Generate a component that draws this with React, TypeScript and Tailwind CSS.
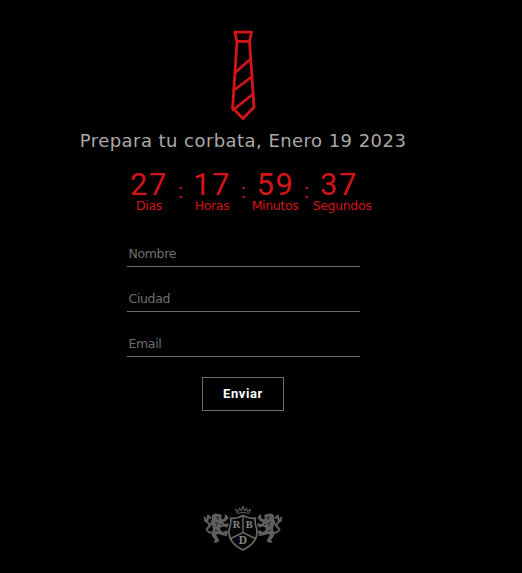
import React from "react";

const units = [
  { value: "27", label: "Dias", width: "w-[52px]", shift: "" },
  { value: "17", label: "Horas", width: "w-[52px]", shift: "" },
  { value: "59", label: "Minutos", width: "w-[52px]", shift: "pl-px" },
  { value: "37", label: "Segundos", width: "w-[60px]", shift: "pr-[6px]" },
];

const fields = ["Nombre", "Ciudad", "Email"];

function Tie() {
  return (
    <svg width="26" height="92" viewBox="230 30 26 92" fill="none" stroke="#d31418" strokeWidth="2.8" strokeLinejoin="round" strokeLinecap="round">
      <path d="M234.7 32.2H251.5L249.5 41.3H237Z" />
      <path d="M237 41.3L232.6 108L243 118.5L254 107.3L249.5 41.3" />
      <path d="M250.7 58.7L235.2 72.5M252 76.5L233.6 90.5M253.2 94L233 110" />
    </svg>
  );
}

function Lion() {
  return (
    <g>
      <path
        fill="#5e5e5e"
        d="M9 10L12 8.5L16 9L19 10L18 13L20 14.5L22 12L21.5 9.5L24 10L25.5 13L23 16L20 17.5L22 19L25 18L26 20L24 22.5L20 21.5L17 23L18 26L21 27L23 25L25.5 27L24 29L24.5 31L20 30.5L15 29L13 30L15 33L16.5 36L13 38L10.5 37L12 35L9 31L8.5 28L10 24L9 20L7.5 17L9 14Z"
      />
      <path
        fill="none"
        stroke="#5e5e5e"
        strokeWidth="2"
        strokeLinecap="round"
        strokeLinejoin="round"
        d="M9 28L5.5 27L3.5 24.5L6 21.5L6.5 19L4 17L2 15.5M4 17L1.5 12.5M4.5 16L5 10.5L7.5 13M6 22L8 19"
      />
      <path fill="none" stroke="#0a0a0a" strokeWidth="0.7" d="M13 12L16 12.5L14 15M12 17L15 18.5L13 21M17 19L19 20M12 25L15 26" />
    </g>
  );
}

function Crest() {
  return (
    <svg width="80" height="47" viewBox="0 0 80 47">
      <Lion />
      <g transform="translate(80 0) scale(-1 1)">
        <Lion />
      </g>
      <path
        d="M27.5 13.2Q34 14 40 10.5Q46 14 52.5 13.2Q51.5 18 53.5 23C56 34 48 41 40 45C32 41 24 34 26.5 23Q28.5 18 27.5 13.2Z"
        fill="#050505"
        stroke="#6a6a6a"
        strokeWidth="1.6"
      />
      <path d="M40 10.5V27.5M26.8 34L40 27.5L53.2 34" fill="none" stroke="#6a6a6a" strokeWidth="1.4" />
      <path d="M34 8.5Q40 6 46 8.5M34 8L32.5 4L35.5 6.5L36.5 2.8L38.5 6L40 1L41.5 6L43.5 2.8L44.5 6.5L47.5 4L46 8" fill="none" stroke="#606060" strokeWidth="1" />
      <g fill="#868686" fontFamily="Liberation Serif, serif" fontWeight="700" fontSize="10.5" textAnchor="middle">
        <text x="33.6" y="22.8">R</text>
        <text x="46.2" y="22.8">B</text>
        <text x="40" y="38.5" fontSize="11.5">D</text>
      </g>
    </svg>
  );
}

export default function App() {
  return (
    <main className="h-[573px] w-full overflow-hidden bg-black font-['DejaVu_Sans','Open_Sans',sans-serif]">
      <div className="flex w-[486px] flex-col items-center pt-[30px]">
        <Tie />
        <h1 className="mt-[5px] h-7 whitespace-nowrap text-[18px] leading-7 tracking-[0.45px] text-[#aaa8a5]">
          Prepara tu corbata, Enero 19 2023
        </h1>
        <div className="mt-[11px] flex h-[52px] w-[258px] pl-[9px] text-[#d31418]">
          {units.map((unit, i) => (
            <React.Fragment key={unit.label}>
              {i > 0 && <span className="w-[11px] pt-[13px] text-center font-['Roboto'] text-xl leading-6">:</span>}
              <div className={`flex flex-col items-center ${unit.width}`}>
                <span className={`h-[33px] font-['Roboto'] text-[31px] leading-[38px] tracking-[1.6px] ${unit.shift}`}>{unit.value}</span>
                <span className="text-[12.5px] leading-[14px] tracking-[-0.35px]">{unit.label}</span>
              </div>
            </React.Fragment>
          ))}
        </div>
        <form className="mt-[22px] flex flex-col items-center" onSubmit={(e) => e.preventDefault()}>
          <div className="flex flex-col gap-[18px]">
            {fields.map((field) => (
              <input
                key={field}
                aria-label={field}
                placeholder={field}
                className="h-[27px] w-[233px] border-b border-[#6b6b6b] bg-transparent px-0.5 text-[12.5px] text-white outline-none placeholder:tracking-[-0.35px] placeholder:text-[#6f6f6f]"
              />
            ))}
          </div>
          <button className="mt-5 h-[34px] w-[82px] border border-[#6b6b6b] font-['Roboto'] text-[13px] font-bold tracking-[0.6px] text-white">
            Enviar
          </button>
        </form>
        <div className="mt-[94px]">
          <Crest />
        </div>
      </div>
    </main>
  );
}
